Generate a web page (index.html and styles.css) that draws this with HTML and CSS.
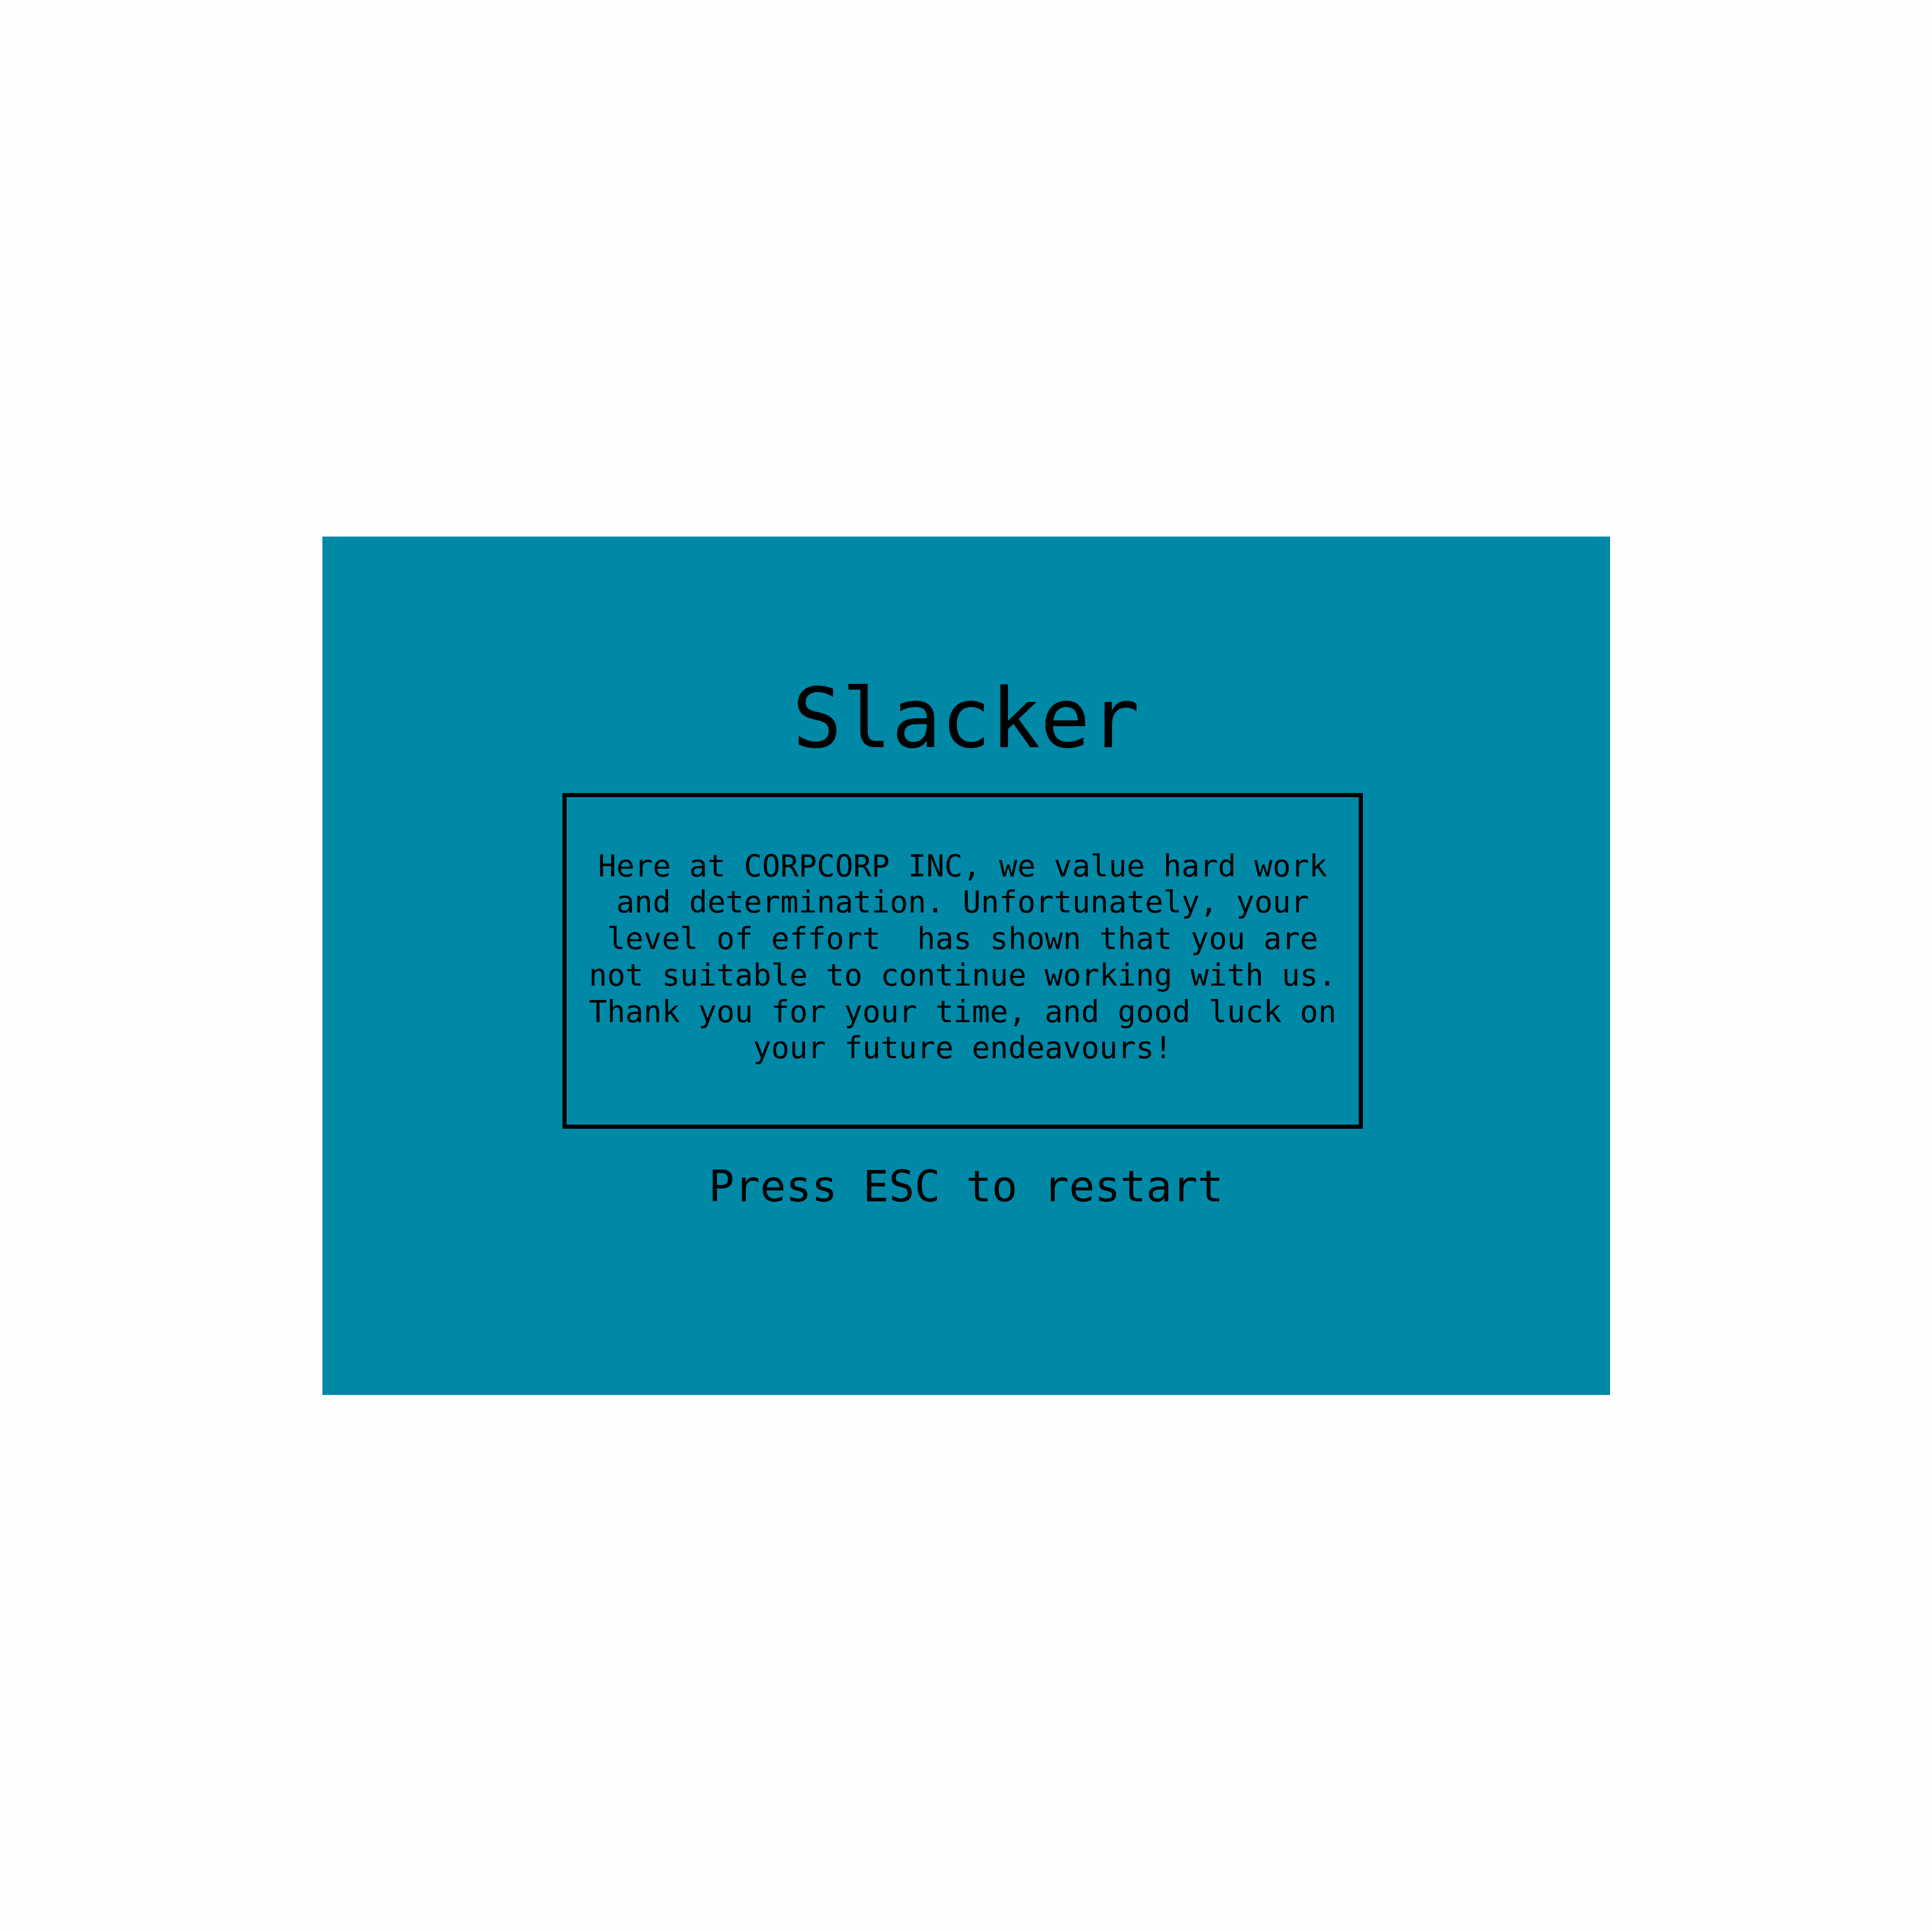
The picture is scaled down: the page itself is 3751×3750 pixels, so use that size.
FILE: index.html
```html
<!DOCTYPE html>
<html lang="en">
<head>
<meta charset="utf-8">
<title>Slacker</title>
<link rel="stylesheet" href="styles.css">
</head>
<body>
<main class="screen">
  <h1 class="title">Slacker</h1>
  <div class="message">
    <p class="message-text">Here at CORPCORP INC, we value hard work<br>and determination. Unfortunately, your<br>level of effort&nbsp; has shown that you are<br>not suitable to continue working with us.<br>Thank you for your time, and good luck on<br>your future endeavours!</p>
  </div>
  <p class="hint">Press ESC to restart</p>
</main>
</body>
</html>
```
FILE: styles.css
```css
html, body {
  margin: 0;
  padding: 0;
}
body {
  background: #fefefe;
  width: 3751px;
  height: 3750px;
  display: flex;
  align-items: center;
  justify-content: center;
  font-family: "DejaVu Sans Mono", "Liberation Mono", monospace;
  color: #000;
}
.screen {
  box-sizing: border-box;
  width: 2500px;
  height: 1667px;
  background: #0088a7;
  display: flex;
  flex-direction: column;
  align-items: center;
  padding-top: 274px;
}
.title {
  margin: 0;
  font-size: 160px;
  font-weight: normal;
  line-height: 1;
}
.message {
  box-sizing: border-box;
  width: 1554px;
  height: 652px;
  margin: 64px 13px 0 0;
  border: 8px solid #000;
  padding: 99px 20px 0;
}
.message-text {
  margin: 0;
  font-size: 58.8px;
  line-height: 70.8px;
  text-align: center;
}
.hint {
  margin: 71px 0 0;
  font-size: 83px;
  line-height: 1;
}
```
